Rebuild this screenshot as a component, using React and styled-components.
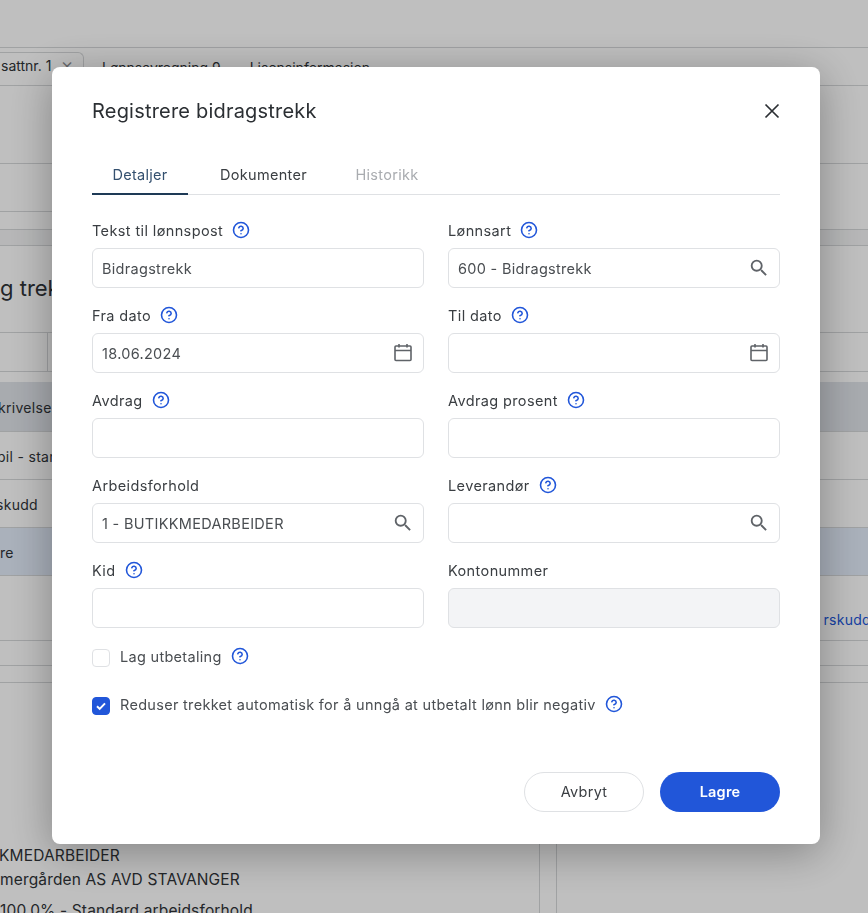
import React from "react";
import styled, { createGlobalStyle } from "styled-components";

const GlobalStyle = createGlobalStyle`
html, body {
    margin: 0;
    padding: 0;
    background: #fff;
    font-family: Inter, "Liberation Sans", sans-serif;
}
* {
    box-sizing: border-box;
}
`;

const HelpIcon = () => (
    <HelpSvg viewBox="0 0 24 24" fill="none" stroke="currentColor" strokeWidth="2.1" strokeLinecap="round" strokeLinejoin="round">
        <circle cx="12" cy="12" r="10" />
        <path d="M9.09 9a3 3 0 0 1 5.83 1c0 2-3 3-3 3" />
        <path d="M12 17h.01" />
    </HelpSvg>
);

const SearchIcon = () => (
    <FieldSvg viewBox="0 0 24 24" fill="currentColor">
        <path d="M15.5 14h-.79l-.28-.27A6.471 6.471 0 0 0 16 9.5 6.5 6.5 0 1 0 9.5 16c1.61 0 3.09-.59 4.23-1.57l.27.28v.79l5 4.99L20.49 19l-4.99-5zm-6 0C7.01 14 5 11.99 5 9.5S7.01 5 9.5 5 14 7.01 14 9.5 11.99 14 9.5 14z" />
    </FieldSvg>
);

const CalendarIcon = () => (
    <FieldSvg viewBox="0 0 22 22" fill="none" stroke="currentColor" strokeWidth="1.6">
        <rect x="3" y="4" width="16" height="14.5" rx="1" />
        <path d="M3 8.5h16M7 2v3.5M15 2v3.5" />
    </FieldSvg>
);

const CloseIcon = () => (
    <CloseSvg viewBox="0 0 16 16" fill="none" stroke="currentColor" strokeWidth="1.7">
        <path d="M1.5 1.5l13 13M14.5 1.5l-13 13" />
    </CloseSvg>
);

const fields = [
    { label: "Tekst til lønnspost", help: true, value: "Bidragstrekk" },
    { label: "Lønnsart", help: true, value: "600 - Bidragstrekk", icon: "search" },
    { label: "Fra dato", help: true, value: "18.06.2024", icon: "calendar" },
    { label: "Til dato", help: true, value: "", icon: "calendar" },
    { label: "Avdrag", help: true, value: "" },
    { label: "Avdrag prosent", help: true, value: "" },
    { label: "Arbeidsforhold", value: "1 - BUTIKKMEDARBEIDER", icon: "search" },
    { label: "Leverandør", help: true, value: "", icon: "search" },
    { label: "Kid", help: true, value: "" },
    { label: "Kontonummer", value: "", disabled: true },
];

const App = () => {
    return (
        <>
            <GlobalStyle />
            <Page>
                <Band $height={48} $line />
                <TabBand>
                    <OpenTab>
                        sattnr. 1 <TabClose>×</TabClose>
                    </OpenTab>
                    <PageTab>Lønnsavregning 9</PageTab>
                    <PageTab>Lisensinformasjon</PageTab>
                </TabBand>
                <Band $height={78} $line />
                <Band $height={48}>
                    <ShortRule />
                </Band>
                <Band $height={18} $line />
                <Band $height={16} $bg="#f4f5f6" $line />
                <PageTitleBand>g trek</PageTitleBand>
                <TableHead>
                    <HeadCell />
                </TableHead>
                <Band $height={10} />
                <TableRow $height={50} $bg="#e0e4ea">
                    <RowText $shift={2}>krivelse</RowText>
                </TableRow>
                <TableRow>
                    <RowText $shift={3}>bil - stan</RowText>
                </TableRow>
                <TableRow>
                    <RowText $shift={4}>skudd</RowText>
                </TableRow>
                <TableRow $bg="#e3ecfa">
                    <RowText>re</RowText>
                </TableRow>
                <LinkBand>
                    <PageLink>rskudd</PageLink>
                </LinkBand>
                <Band $height={25} $line />
                <Band $height={17} $line />
                <Panels>
                    <LeftPanel>
                        <PanelLine $shift={1}>KMEDARBEIDER</PanelLine>
                        <PanelLine>mergården AS AVD STAVANGER</PanelLine>
                        <PanelLine $gap>100,0% - Standard arbeidsforhold</PanelLine>
                    </LeftPanel>
                    <RightPanel />
                </Panels>
            </Page>
            <Overlay>
                <Modal>
                    <ModalHeader>
                        <ModalTitle>Registrere bidragstrekk</ModalTitle>
                        <CloseButton>
                            <CloseIcon />
                        </CloseButton>
                    </ModalHeader>
                    <Tabs>
                        <Tab $active>Detaljer</Tab>
                        <Tab>Dokumenter</Tab>
                        <Tab $muted>Historikk</Tab>
                    </Tabs>
                    <FormGrid>
                        {fields.map((field) => {
                            return (
                                <Field key={field.label}>
                                    <Label>
                                        {field.label}
                                        {field.help && <HelpIcon />}
                                    </Label>
                                    <InputBox $disabled={field.disabled}>
                                        <Input defaultValue={field.value} disabled={field.disabled} />
                                        {field.icon === "search" && <SearchIcon />}
                                        {field.icon === "calendar" && <CalendarIcon />}
                                    </InputBox>
                                </Field>
                            );
                        })}
                    </FormGrid>
                    <CheckRow $top={21}>
                        <CheckBox />
                        <CheckLabel>
                            <CheckText>Lag utbetaling</CheckText>
                            <HelpIcon />
                        </CheckLabel>
                    </CheckRow>
                    <CheckRow $top={30}>
                        <CheckBox $checked>
                            <svg width="12" height="12" viewBox="0 0 12 12" fill="none" stroke="#fff" strokeWidth="2">
                                <path d="M2 6.3l2.7 2.6L10 3.4" />
                            </svg>
                        </CheckBox>
                        <CheckLabel>
                            <CheckText>Reduser trekket automatisk for å unngå at utbetalt lønn blir negativ</CheckText>
                            <HelpIcon />
                        </CheckLabel>
                    </CheckRow>
                    <Footer>
                        <CancelButton>Avbryt</CancelButton>
                        <SaveButton>Lagre</SaveButton>
                    </Footer>
                </Modal>
            </Overlay>
        </>
    );
};

const Page = styled.div`
display: flex;
flex-direction: column;
height: 913px;
overflow: hidden;
color: #2f3337;
font-size: 15px;
`;

const Band = styled.div`
flex: none;
height: ${(props) => props.$height}px;
background-color: ${(props) => props.$bg || "transparent"};
border-bottom: ${(props) => (props.$line ? "1px solid #d6d8da" : "none")};
display: flex;
align-items: flex-end;
`;

const ShortRule = styled.div`
width: 60px;
height: 1px;
background-color: #d6d8da;
`;

const TabBand = styled.div`
flex: none;
height: 38px;
display: flex;
align-items: flex-end;
border-bottom: 1px solid #d6d8da;
`;

const OpenTab = styled.div`
display: flex;
align-items: center;
gap: 9px;
width: 84px;
height: 33px;
padding: 0 0 8px 1px;
border: 1px solid #d6d8da;
border-left: none;
border-bottom: none;
border-radius: 0 6px 0 0;
white-space: nowrap;
font-size: 14px;
letter-spacing: 0;
`;

const TabClose = styled.span`
color: #8a8d90;
font-size: 20px;
font-weight: 300;
`;

const PageTab = styled.div`
height: 33px;
margin-left: 18px;
margin-right: 11px;
padding-top: 7px;
white-space: nowrap;
font-size: 14px;
letter-spacing: 0;
`;

const PageTitleBand = styled.div`
flex: none;
height: 86px;
padding-bottom: 2px;
display: flex;
align-items: center;
font-size: 22px;
`;

const TableHead = styled.div`
flex: none;
height: 40px;
border-top: 1px solid #d6d8da;
border-bottom: 1px solid #d6d8da;
`;

const HeadCell = styled.div`
width: 48px;
height: 100%;
border-right: 1px solid #d6d8da;
`;

const TableRow = styled.div`
flex: none;
height: ${(props) => props.$height || 48}px;
padding-top: 2px;
display: flex;
align-items: center;
background-color: ${(props) => props.$bg || "transparent"};
border-bottom: 1px solid #d6d8da;
`;

const RowText = styled.div`
margin-left: ${(props) => -(props.$shift || 0)}px;
white-space: nowrap;
font-size: 14px;
letter-spacing: 0.3px;
`;

const LinkBand = styled.div`
flex: none;
height: 65px;
display: flex;
justify-content: flex-end;
align-items: flex-end;
padding-bottom: 12px;
border-bottom: 1px solid #d6d8da;
`;

const PageLink = styled.div`
margin-right: -3px;
color: #2156d9;
font-size: 14px;
letter-spacing: 0.3px;
`;

const Panels = styled.div`
flex: 1;
display: grid;
grid-template-columns: 540px 1fr;
column-gap: 16px;
`;

const LeftPanel = styled.div`
border-right: 1px solid #d6d8da;
padding-top: 161px;
white-space: nowrap;
`;

const RightPanel = styled.div`
border-left: 1px solid #d6d8da;
`;

const PanelLine = styled.div`
height: 24px;
line-height: 24px;
font-size: 15.5px;
letter-spacing: 0.15px;
margin-left: ${(props) => -(props.$shift || 0)}px;
margin-top: ${(props) => (props.$gap ? 7 : 0)}px;
`;

const Overlay = styled.div`
position: fixed;
inset: 0;
display: flex;
align-items: flex-start;
padding: 67px 0 0 52px;
background-color: rgba(0, 0, 0, 0.25);
`;

const Modal = styled.div`
width: 768px;
height: 777px;
padding: 28px 40px 32px;
background-color: #fff;
border-radius: 8px;
box-shadow: 0 8px 44px rgba(0, 0, 0, 0.32);
display: flex;
flex-direction: column;
`;

const ModalHeader = styled.div`
display: flex;
justify-content: space-between;
align-items: center;
height: 32px;
`;

const ModalTitle = styled.div`
font-size: 20px;
font-weight: 400;
color: #2b2f33;
letter-spacing: 0.2px;
`;

const CloseButton = styled.div`
display: flex;
color: #2b2f33;
`;

const CloseSvg = styled.svg`
width: 16px;
height: 16px;
`;

const Tabs = styled.div`
display: flex;
gap: 16px;
margin-top: 26px;
height: 42px;
border-bottom: 1px solid #dfe1e4;
`;

const Tab = styled.div`
min-width: 96px;
height: 42px;
padding: 2px 16px 0;
display: flex;
align-items: center;
justify-content: center;
font-size: 14.5px;
letter-spacing: 0.3px;
color: ${(props) => (props.$active ? "#34506f" : props.$muted ? "#a9acb0" : "#3a3e42")};
border-bottom: 2px solid ${(props) => (props.$active ? "#1e3a56" : "transparent")};
`;

const FormGrid = styled.div`
display: grid;
grid-template-columns: 332px 332px;
column-gap: 24px;
row-gap: 17px;
margin-top: 25px;
`;

const Field = styled.div`
display: flex;
flex-direction: column;
gap: 8px;
`;

const Label = styled.div`
display: flex;
align-items: center;
gap: 9px;
height: 20px;
font-size: 14.5px;
letter-spacing: 0.38px;
color: #3a3e42;
`;

const HelpSvg = styled.svg`
width: 18px;
height: 18px;
flex: none;
color: #2156d9;
`;

const InputBox = styled.div`
display: flex;
align-items: center;
height: 40px;
padding: 0 9px;
border: 1px solid #dfe1e4;
border-radius: 6px;
background-color: ${(props) => (props.$disabled ? "#f3f4f6" : "#fff")};
`;

const Input = styled.input`
flex: 1;
min-width: 0;
height: 100%;
padding: 0;
border: none;
outline: none;
background: transparent;
font-family: inherit;
font-size: 14.5px;
letter-spacing: 0.3px;
color: #4a4e52;
`;

const FieldSvg = styled.svg`
width: 22px;
height: 22px;
flex: none;
color: #5f6368;
`;

const CheckRow = styled.div`
display: flex;
align-items: center;
height: 18px;
margin-top: ${(props) => props.$top}px;
gap: 10px;
`;

const CheckLabel = styled.div`
display: flex;
align-items: center;
gap: 9px;
margin-bottom: 4px;
`;

const CheckBox = styled.div`
width: 18px;
height: 18px;
flex: none;
display: flex;
align-items: center;
justify-content: center;
border-radius: 4px;
border: 1px solid ${(props) => (props.$checked ? "#2156d9" : "#dfe1e4")};
background-color: ${(props) => (props.$checked ? "#2156d9" : "#fff")};
`;

const CheckText = styled.div`
font-size: 14.5px;
letter-spacing: 0.3px;
color: #4a4e52;
`;

const Footer = styled.div`
display: flex;
justify-content: flex-end;
gap: 16px;
margin-top: 57px;
`;

const CancelButton = styled.div`
width: 120px;
height: 40px;
padding-bottom: 2px;
display: flex;
align-items: center;
justify-content: center;
border: 1px solid #dfe1e4;
border-radius: 20px;
font-size: 14.5px;
letter-spacing: 0.3px;
color: #3a3e42;
`;

const SaveButton = styled.div`
width: 120px;
height: 40px;
padding-bottom: 2px;
display: flex;
align-items: center;
justify-content: center;
border-radius: 20px;
background-color: #2156d9;
font-size: 14.5px;
font-weight: 600;
letter-spacing: 0.2px;
color: #fff;
`;

export default App;
